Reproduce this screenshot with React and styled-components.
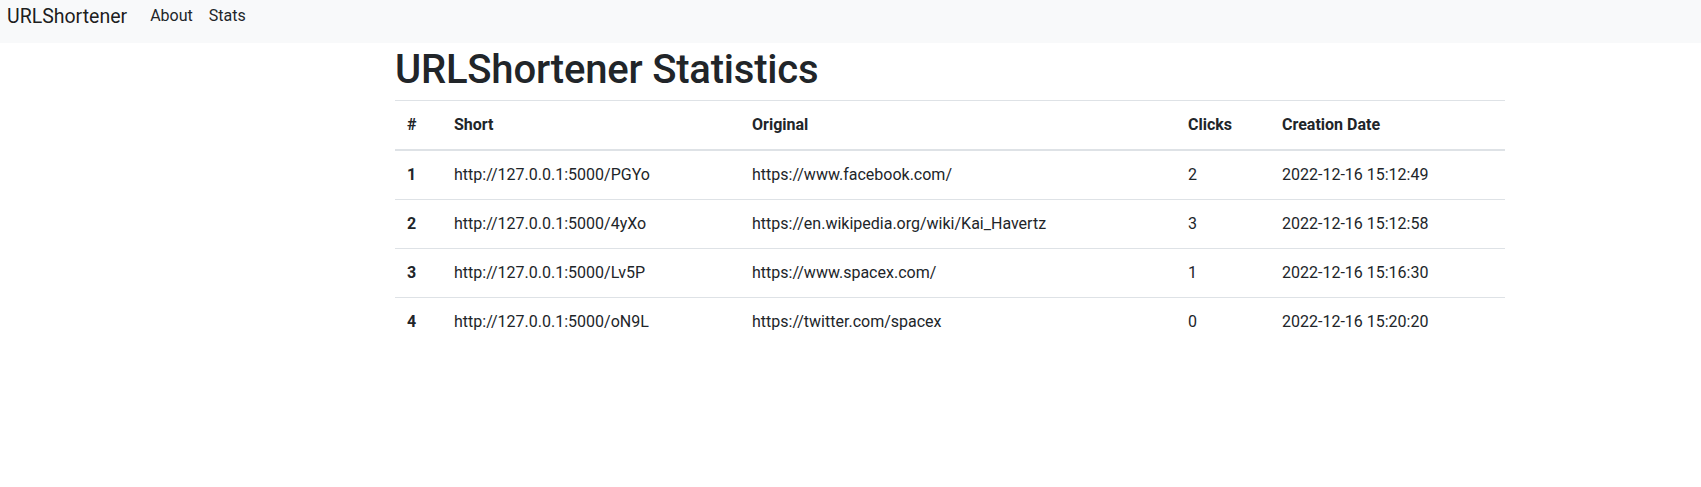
import React from 'react';
import styled, { createGlobalStyle } from 'styled-components';

const GlobalStyle = createGlobalStyle`
  body {
    margin: 0;
    background: #fff;
    color: #212529;
    font-family: Roboto, "Noto Sans", sans-serif;
    font-size: 16px;
    line-height: 1.5;
  }
`;

const links = [
  { id: 1, short: 'http://127.0.0.1:5000/PGYo', original: 'https://www.facebook.com/', clicks: 2, date: '2022-12-16 15:12:49' },
  { id: 2, short: 'http://127.0.0.1:5000/4yXo', original: 'https://en.wikipedia.org/wiki/Kai_Havertz', clicks: 3, date: '2022-12-16 15:12:58' },
  { id: 3, short: 'http://127.0.0.1:5000/Lv5P', original: 'https://www.spacex.com/', clicks: 1, date: '2022-12-16 15:16:30' },
  { id: 4, short: 'http://127.0.0.1:5000/oN9L', original: 'https://twitter.com/spacex', clicks: 0, date: '2022-12-16 15:20:20' },
];

export default function App() {
  return (
    <>
      <GlobalStyle />
      <Navbar>
        <Brand href="#">URLShortener</Brand>
        <NavLinks>
          <NavLink href="#">About</NavLink>
          <NavLink href="#">Stats</NavLink>
        </NavLinks>
      </Navbar>
      <Main>
        <Title>URLShortener Statistics</Title>
        <Table>
          <colgroup>
            <col width="47" />
            <col width="298" />
            <col width="436" />
            <col width="94" />
            <col width="235" />
          </colgroup>
          <thead>
            <tr>
              <HeadCell>#</HeadCell>
              <HeadCell>Short</HeadCell>
              <HeadCell>Original</HeadCell>
              <HeadCell>Clicks</HeadCell>
              <HeadCell>Creation Date</HeadCell>
            </tr>
          </thead>
          <tbody>
            {links.map(l => (
              <tr key={l.id}>
                <Cell $bold>{l.id}</Cell>
                <Cell>{l.short}</Cell>
                <Cell>{l.original}</Cell>
                <Cell>{l.clicks}</Cell>
                <Cell>{l.date}</Cell>
              </tr>
            ))}
          </tbody>
        </Table>
      </Main>
    </>
  );
}

const Navbar = styled.nav`
  display: flex;
  align-items: flex-start;
  height: 43px;
  padding: 0 7px;
  background-color: #f8f9fa;
`;

const Brand = styled.a`
  margin-top: 2px;
  margin-right: 15px;
  font-size: 19.5px;
  line-height: 30px;
  color: rgba(0, 0, 0, 0.9);
  text-decoration: none;
  white-space: nowrap;
`;

const NavLinks = styled.div`
  display: flex;
  margin-top: 4px;
`;

const NavLink = styled.a`
  padding: 0 8px;
  font-size: 16px;
  line-height: 24px;
  color: #212529;
  text-decoration: none;
`;

const Main = styled.main`
  width: 1110px;
  margin-left: 395px;
`;

const Title = styled.h1`
  margin: 3px 0 6px;
  font-size: 40px;
  font-weight: 500;
  line-height: 48px;
  letter-spacing: -0.2px;
  color: #212529;
`;

const Table = styled.table`
  width: 100%;
  table-layout: fixed;
  border-collapse: collapse;
  color: #212529;
`;

const HeadCell = styled.th`
  padding: 12px;
  text-align: left;
  font-weight: 700;
  vertical-align: bottom;
  border-top: 1px solid #dee2e6;
  border-bottom: 2px solid #dee2e6;
`;

const Cell = styled.td`
  padding: 12px;
  font-weight: ${p => (p.$bold ? 700 : 400)};
  border-top: 1px solid #dee2e6;
  white-space: nowrap;
`;
